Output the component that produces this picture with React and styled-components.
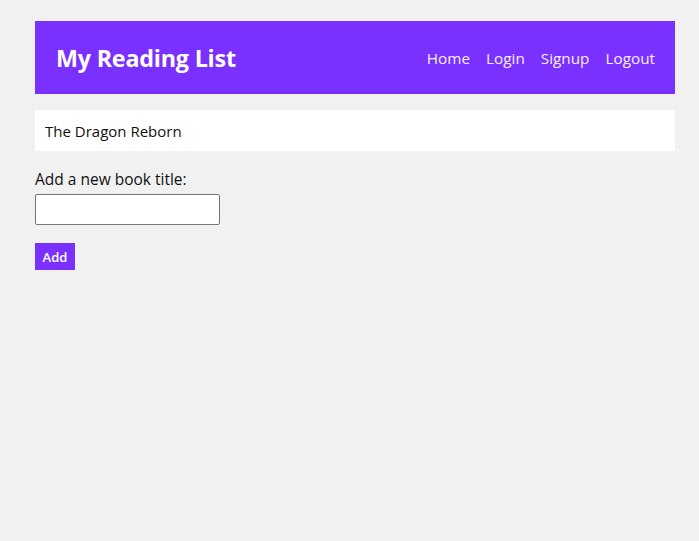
import React, { useState } from "react";
import styled, { createGlobalStyle } from "styled-components";

const GlobalStyle = createGlobalStyle`
  body {
    margin: 0;
    background: #f1f1f1;
    font-family: "Open Sans", "Noto Sans", sans-serif;
    color: #111;
  }
`;

const Page = styled.div`
  padding: 21px 24px 0 35px;
`;

const Navbar = styled.nav`
  width: 640px;
  height: 73px;
  box-sizing: border-box;
  background: #7a30ff;
  padding: 0 20px 0 21px;
  display: flex;
  align-items: center;
  justify-content: space-between;

  h1 {
    margin: 0;
    color: #fff;
    font-size: 23.3px;
    font-weight: 700;
    letter-spacing: -0.2px;
  }
`;

const Links = styled.div`
  display: flex;
  gap: 16px;

  a {
    color: #f4efff;
    text-decoration: none;
    font-size: 15.3px;
  }
`;

const BookList = styled.ul`
  list-style: none;
  margin: 16px 0 0;
  padding: 0;
  width: 640px;
`;

const BookItem = styled.li`
  background: #fff;
  height: 41px;
  box-sizing: border-box;
  padding: 0 10px;
  display: flex;
  align-items: center;
  font-size: 15px;
`;

const Form = styled.form`
  margin-top: 17px;
  display: flex;
  flex-direction: column;
  align-items: flex-start;

  label {
    font-size: 15.5px;
    line-height: 22px;
  }

  input {
    margin-top: 4px;
    width: 185px;
    height: 31px;
    box-sizing: border-box;
    border: 1px solid #767676;
    border-radius: 2px;
    background: #fff;
  }
`;

const Button = styled.button`
  margin-top: 18px;
  background: #7a30ff;
  color: #fff;
  border: none;
  width: 40px;
  height: 27px;
  padding: 0;
  font-family: "Open Sans", sans-serif;
  font-weight: 600;
  font-size: 13px;
`;

export default function App() {
  const [title, setTitle] = useState("");
  return (
    <Page>
      <GlobalStyle />
      <Navbar>
        <h1>My Reading List</h1>
        <Links>
          <a href="#">Home</a>
          <a href="#">Login</a>
          <a href="#">Signup</a>
          <a href="#">Logout</a>
        </Links>
      </Navbar>
      <BookList>
        <BookItem>The Dragon Reborn</BookItem>
      </BookList>
      <Form onSubmit={(e) => e.preventDefault()}>
        <label>Add a new book title:</label>
        <input value={title} onChange={(e) => setTitle(e.target.value)} />
        <Button>Add</Button>
      </Form>
    </Page>
  );
}
